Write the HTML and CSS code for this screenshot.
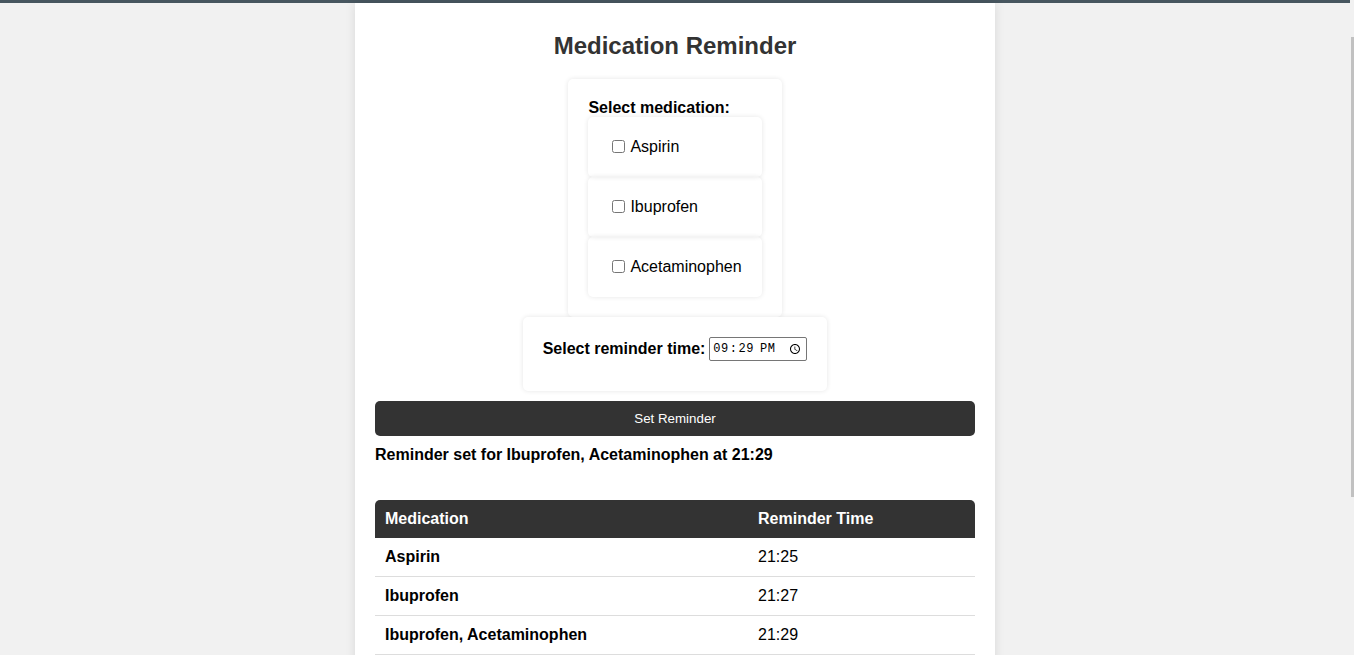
FILE: index.html
```html
<!DOCTYPE html>
<html lang="en">
<head>
<meta charset="utf-8">
<title>Medication Reminder</title>
<link rel="stylesheet" href="styles.css">
</head>
<body>
<div class="topbar"></div>
<div class="container">
  <h1 class="title">Medication Reminder</h1>
  <div class="forms">
    <div class="card med-card">
      <div class="card-label">Select medication:</div>
      <label class="med-item"><input type="checkbox">Aspirin</label>
      <label class="med-item"><input type="checkbox">Ibuprofen</label>
      <label class="med-item"><input type="checkbox">Acetaminophen</label>
    </div>
    <div class="card time-card">
      <label class="time-label">Select reminder time:</label>
      <input class="time-input" type="time" value="21:29">
    </div>
  </div>
  <button class="set-btn">Set Reminder</button>
  <p class="result">Reminder set for Ibuprofen, Acetaminophen at 21:29</p>
  <table class="rem-table">
    <thead>
      <tr><th class="col-med">Medication</th><th>Reminder Time</th></tr>
    </thead>
    <tbody>
      <tr><td class="med-name">Aspirin</td><td>21:25</td></tr>
      <tr><td class="med-name">Ibuprofen</td><td>21:27</td></tr>
      <tr><td class="med-name">Ibuprofen, Acetaminophen</td><td>21:29</td></tr>
    </tbody>
  </table>
</div>
<div class="scroll-thumb"></div>
</body>
</html>
```
FILE: styles.css
```css
html { overflow: hidden; }
html::-webkit-scrollbar { width: 0; height: 0; }
body {
  margin: 0;
  padding: 0 4px 0 0;
  background: #f1f1f1;
  font-family: "Liberation Sans", Arial, sans-serif;
  color: #000;
}
.topbar {
  height: 3px;
  background: #47565f;
}
.container {
  width: 600px;
  margin: 0 auto;
  background: #fff;
  padding: 29px 20px 40px;
  box-shadow: 0 0 10px rgba(0,0,0,0.1);
  min-height: 700px;
}
.title {
  font-size: 24px;
  font-weight: bold;
  color: #333;
  text-align: center;
  margin: 0 0 19px;
  line-height: 28px;
}
.forms {
  display: flex;
  flex-direction: column;
  align-items: center;
}
.card {
  background: #fff;
  border-radius: 5px;
  box-shadow: 0 0 5px rgba(0,0,0,0.1);
  padding: 20px;
}
.card-label {
  font-weight: bold;
  font-size: 16px;
  line-height: 18px;
  white-space: nowrap;
}
.med-item {
  display: block;
  padding: 20px;
  line-height: 20px;
  font-size: 16px;
  border-radius: 5px;
  box-shadow: 0 0 5px rgba(0,0,0,0.1);
  white-space: nowrap;
}
.med-item input {
  margin: 3px 5px 3px 4px;
  vertical-align: -1px;
}
.time-card {
  padding: 20px 20px 30px;
  display: flex;
  align-items: center;
}
.time-label {
  font-weight: bold;
  font-size: 16px;
  margin-right: 4px;
}
.time-input {
  width: 98px;
  height: 24px;
  box-sizing: border-box;
  border: 1px solid #767676;
  border-radius: 2px;
  font-family: "Liberation Mono", monospace;
  font-size: 12px;
  letter-spacing: 0.5px;
  padding: 1px 2px;
}
.set-btn {
  display: block;
  width: 600px;
  height: 35px;
  margin-top: 10px;
  background: #333;
  color: #fff;
  border: none;
  border-radius: 5px;
  font-family: "Liberation Sans", Arial, sans-serif;
  font-size: 13.33px;
}
.result {
  font-weight: bold;
  font-size: 16px;
  line-height: 18px;
  margin: 10px 0 36px;
}
.rem-table {
  width: 600px;
  border-collapse: collapse;
  font-size: 16px;
}
.rem-table th {
  background: #333;
  color: #fff;
  text-align: left;
  padding: 10px;
  line-height: 18px;
  font-weight: bold;
}
.rem-table th:first-child { border-top-left-radius: 5px; }
.rem-table th:last-child { border-top-right-radius: 5px; }
.col-med { width: 353px; }
.rem-table td {
  padding: 10px;
  line-height: 18px;
  border-bottom: 1px solid #ddd;
}
.med-name { font-weight: bold; }
.scroll-thumb {
  position: fixed;
  right: 0;
  top: 37px;
  width: 3px;
  height: 460px;
  background: #c1c1c1;
}
```
